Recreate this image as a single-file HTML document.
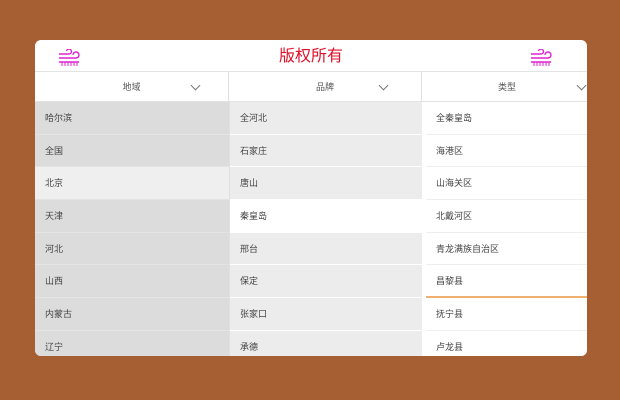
<!DOCTYPE html>
<html><head><meta charset="utf-8"><style>
*{margin:0;padding:0;box-sizing:border-box}
body{width:620px;height:400px;background:#a65f33;font-family:"Liberation Sans","Noto Sans CJK SC",sans-serif;position:relative;overflow:hidden}
.card{position:absolute;left:35px;top:40px;width:552px;height:316px;background:#fff;border-radius:6px;overflow:hidden}
.title{position:absolute;left:0;top:0;width:552px;height:31px;text-align:center;line-height:34px;color:#e0102a;font-size:16px}
.ic{position:absolute;top:9px}
.hdr{position:absolute;top:31px;left:0;width:552px;height:31px;border-top:1px solid #e3e3e3;border-bottom:1px solid #e3e3e3}
.h{position:absolute;top:0;height:30px;font-size:9px;color:#555;line-height:30px;text-align:center;border-right:1px solid #e0e0e0}
.chev{position:absolute;top:10px;width:7px;height:7px;border-right:1px solid #777;border-bottom:1px solid #777;transform:rotate(45deg)}
.col{position:absolute;top:62px}
.r{height:32.7px;font-size:9px;color:#444;line-height:32px;padding-left:10px}
.c1 .r{background:#dcdcdc;border-bottom:1px solid #e4e4e4}
.c2 .r{background:#ececec;border-bottom:1px solid #fff}
.c3 .r{background:#fff;border-bottom:1px solid #eee;margin-left:4px;padding-left:10px}
</style></head><body>
<div class="card">
<div class="title">版权所有</div>
<svg class="ic" style="left:23px" width="24" height="19" viewBox="0 0 24 19" fill="none" stroke="#e020d0" stroke-width="1.4"><path d="M1 5h10a2.5 2.5 0 1 0-2.5-3"/><path d="M1 9h17a3 3 0 1 0-3-3"/><path d="M1 13h20"/><path d="M4 13v4M7 13v4M10 13v4M13 13v4M16 13v4M19 13v4" stroke-width="1"/></svg>
<svg class="ic" style="left:495px" width="24" height="19" viewBox="0 0 24 19" fill="none" stroke="#e020d0" stroke-width="1.4"><path d="M1 5h10a2.5 2.5 0 1 0-2.5-3"/><path d="M1 9h17a3 3 0 1 0-3-3"/><path d="M1 13h20"/><path d="M4 13v4M7 13v4M10 13v4M13 13v4M16 13v4M19 13v4" stroke-width="1"/></svg>
<div class="hdr">
<div class="h" style="left:0;width:194px">地域<span class="chev" style="left:157px"></span></div>
<div class="h" style="left:194px;width:193px">品牌<span class="chev" style="left:151px"></span></div>
<div class="h" style="left:387px;width:170px;border:0">类型<span class="chev" style="left:156px"></span></div>
</div>
<div class="col c1" style="left:0;width:194px">
<div class="r">哈尔滨</div><div class="r">全国</div><div class="r" style="background:#efefef">北京</div><div class="r">天津</div><div class="r">河北</div><div class="r">山西</div><div class="r">内蒙古</div><div class="r">辽宁</div></div>
<div class="col c2" style="left:194px;width:193px;border-left:1px solid #e0e0e0">
<div class="r">全河北</div><div class="r">石家庄</div><div class="r">唐山</div><div class="r" style="background:#fff">秦皇岛</div><div class="r">邢台</div><div class="r">保定</div><div class="r">张家口</div><div class="r">承德</div></div>
<div class="col c3" style="left:387px;width:165px">
<div class="r">全秦皇岛</div><div class="r">海港区</div><div class="r">山海关区</div><div class="r">北戴河区</div><div class="r">青龙满族自治区</div><div class="r" style="border-bottom:2px solid #f0b070">昌黎县</div><div class="r">抚宁县</div><div class="r">卢龙县</div></div>
</div>
</body></html>
